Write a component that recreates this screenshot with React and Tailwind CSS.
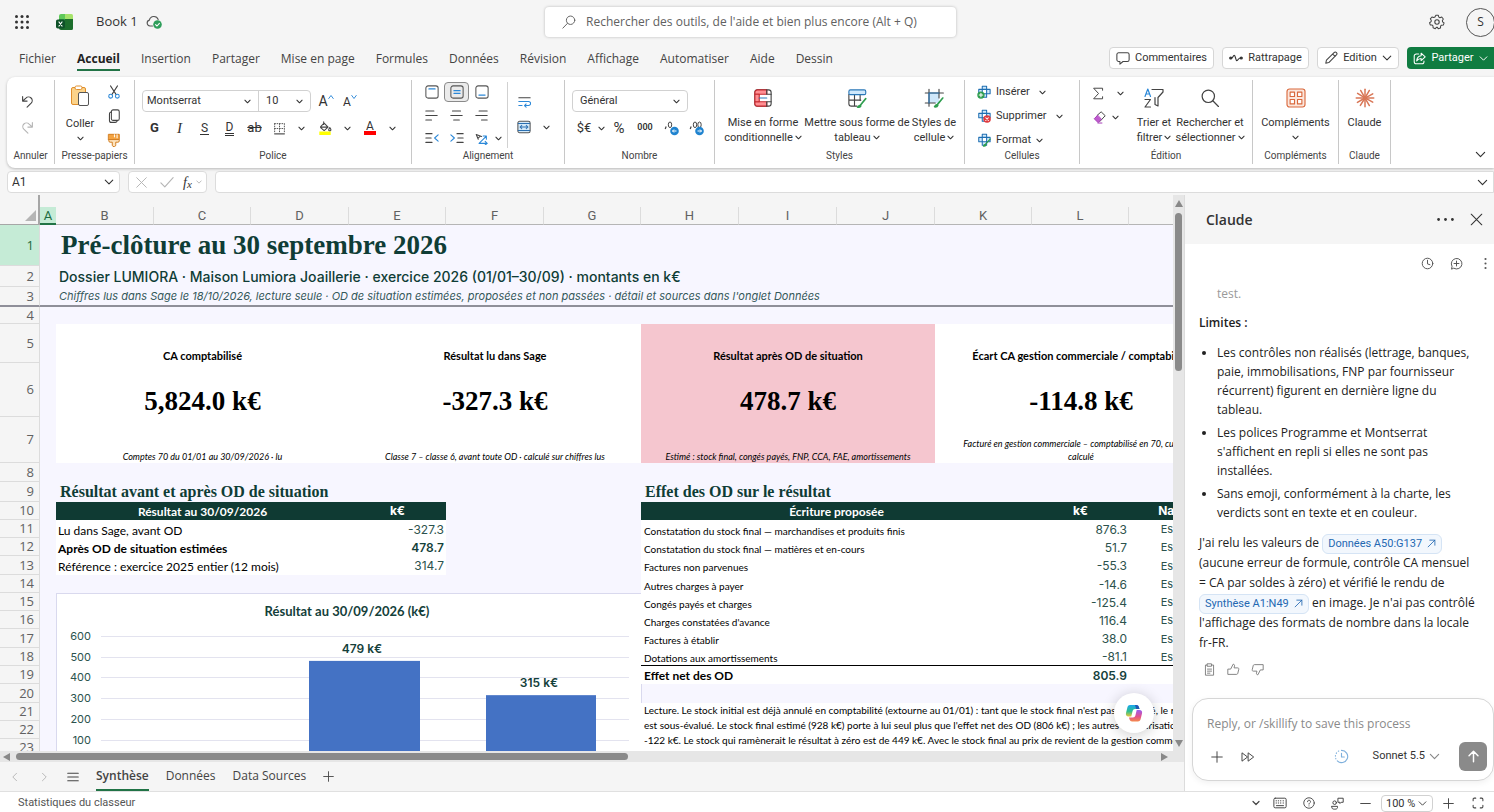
import React, { useState } from 'react';

const ROW_HEAD = 'border-b border-r border-[#dcdcdc] bg-[#f5f5f5] pr-[5px] text-right align-middle font-normal text-[#616161]';

const menuTabs = [
  'Fichier', 'Accueil', 'Insertion', 'Partager', 'Mise en page', 'Formules',
  'Données', 'Révision', 'Affichage', 'Automatiser', 'Aide', 'Dessin',
];

const columns = ['B', 'C', 'D', 'E', 'F', 'G', 'H', 'I', 'J', 'K', 'L', 'M'];

const entries = [
  { row: 11, label: 'Constatation du stock final — marchandises et produits finis', value: '876.3' },
  { row: 12, label: 'Constatation du stock final — matières et en-cours', value: '51.7' },
  { row: 13, label: 'Factures non parvenues', value: '-55.3' },
  { row: 14, label: 'Autres charges à payer', value: '-14.6' },
  { row: 15, label: 'Congés payés et charges', value: '-125.4' },
  { row: 16, label: "Charges constatées d'avance", value: '116.4' },
  { row: 17, label: 'Factures à établir', value: '38.0' },
  { row: 18, label: 'Dotations aux amortissements', value: '-81.1' },
];

const results = {
  11: { label: 'Lu dans Sage, avant OD', value: '-327.3' },
  12: { label: 'Après OD de situation estimées', value: '478.7', bold: true },
  13: { label: 'Référence : exercice 2025 entier (12 mois)', value: '314.7' },
};

const kpis = [
  { title: 'CA comptabilisé', value: '5,824.0 k€', note: ['Comptes 70 du 01/01 au 30/09/2026 · lu'] },
  { title: 'Résultat lu dans Sage', value: '-327.3 k€', note: ['Classe 7 – classe 6, avant toute OD · calculé sur chiffres lus'] },
  { title: 'Résultat après OD de situation', value: '478.7 k€', note: ['Estimé : stock final, congés payés, FNP, CCA, FAE, amortissements'], pink: true },
  { title: 'Écart CA gestion commerciale / comptabilité', value: '-114.8 k€', note: ['Facturé en gestion commerciale – comptabilisé en 70, cumul lu,', 'calculé'] },
];

/* ---------- Icons ---------- */

const Svg = ({ size = 16, children, className = '', ...rest }) => (
  <svg
    width={size}
    height={size}
    viewBox="0 0 16 16"
    fill="none"
    stroke="currentColor"
    strokeLinecap="round"
    strokeLinejoin="round"
    aria-hidden="true"
    className={`shrink-0 ${className}`}
    {...rest}
  >
    {children}
  </svg>
);

const Chevron = ({ size = 7, className = '' }) => (
  <Svg size={size} className={className} strokeWidth={size > 8 ? 1.7 : 2.4}>
    <path d="M2 5l6 6 6-6" />
  </Svg>
);

const WaffleIcon = () => (
  <Svg size={16} stroke="none" fill="#333">
    {[2.5, 8, 13.5].map((y) => [2.5, 8, 13.5].map((x) => <circle key={`${x}-${y}`} cx={x} cy={y} r="1.5" />))}
  </Svg>
);

const ExcelLogo = () => (
  <svg width="18" height="18" viewBox="0 0 18 18" aria-hidden="true">
    <path d="M5 1h5v5.5H3V3a2 2 0 0 1 2-2z" fill="#5fc95a" />
    <path d="M9 1h6.500A1.500 1.500 0 0 1 17 2.500V6.500H9z" fill="#a6e36b" />
    <path d="M3 6h14v4H3z" fill="#2f9e46" />
    <path d="M9 6h8v9.500A1.500 1.500 0 0 1 15.500 17H5a2 2 0 0 1-2-2v-3h6z" fill="#1c6e2c" />
    <rect x="0" y="6.500" width="9" height="9" rx="1.800" fill="#0e5128" />
    <path d="M3 9l3 4M6 9l-3 4" stroke="#fff" strokeWidth="1.200" strokeLinecap="round" />
  </svg>
);

const CloudSavedIcon = () => (
  <Svg size={16} stroke="#555" strokeWidth="1.1">
    <path d="M6.500 12H4a3 3 0 0 1-.6-5.900A4.600 4.600 0 0 1 12.200 5.500" />
    <circle cx="11.500" cy="10.500" r="4.300" fill="#2f9e5b" stroke="none" />
    <path d="M9.600 10.700l1.400 1.300 2.400-2.700" stroke="#fff" />
  </Svg>
);

const SearchLeftIcon = () => (
  <Svg size={14} strokeWidth="1.100">
    <circle cx="9.800" cy="6" r="4.800" />
    <path d="M6.200 9.600 1 15" />
  </Svg>
);

const GearIcon = () => (
  <Svg size={16} stroke="#444" strokeWidth="1.100">
    <path d="M6.700 1.200h2.600l.5 1.900 1.200.6 1.900-.7 1.700 2.100-1 1.700.2 1.300 1.600 1.100-.8 2.400-2 .1-.9.900-.1 2-2.400.8L8.300 14h-1l-1.300 1.400-2.300-.9-.1-2-.9-.9-2-.2L0 9.100l1.600-1.200.2-1.300-1-1.700L2.500 3l1.900.6 1.300-.6z" transform="translate(.6 .2) scale(.94)" />
    <circle cx="8" cy="8" r="2.200" />
  </Svg>
);

const UndoIcon = ({ flip, color }) => (
  <Svg size={13} stroke={color} strokeWidth="1.400" className={flip ? '-scale-x-100' : ''}>
    <path d="M2 2v5.500h5.500M2.300 7.200 6 3.800a4.500 4.500 0 0 1 6.500 6.300L7.500 15" />
  </Svg>
);

const PasteIcon = () => (
  <svg width="20" height="22" viewBox="0 0 20 22" aria-hidden="true">
    <rect x="1.500" y="2.500" width="14" height="17" rx="1.500" fill="#fbd38a" stroke="#e08e2b" />
    <rect x="5" y="1" width="7" height="3.500" rx="1.500" fill="#fff" stroke="#e08e2b" />
    <rect x="8.500" y="7.500" width="10" height="13" rx="1.500" fill="#fff" stroke="#555" />
  </svg>
);

const CutIcon = () => (
  <Svg size={14} strokeWidth="1.200">
    <path d="M4 1l6.500 10M12 1 5.500 11" stroke="#444" />
    <circle cx="4.200" cy="12.800" r="2.200" stroke="#2b88d8" />
    <circle cx="11.800" cy="12.800" r="2.200" stroke="#2b88d8" />
  </Svg>
);

const CopyIcon = () => (
  <Svg size={14} stroke="#444" strokeWidth="1.200">
    <rect x="5" y="1" width="9" height="12" rx="2" />
    <path d="M5 3.500c-1.500 0-2.200.8-2.200 2V13c0 1.500.8 2.300 2.200 2.300h4.500c1 0 1.700-.5 2-1.300" />
  </Svg>
);

const BrushIcon = () => (
  <Svg size={14} stroke="#d17b1b" strokeWidth="1.100">
    <path d="M2 1.500h12v6H2z" fill="#f4a340" />
    <path d="M2 7.500h12v1.500a1.500 1.500 0 0 1-1.500 1.500H10V13a2 2 0 0 1-4 1v-3.500H3.500A1.500 1.500 0 0 1 2 9z" fill="#fde3bd" />
    <path d="M8.500 2v2.500M11.500 2v3.500" stroke="#fff" />
  </Svg>
);

const BordersIcon = () => (
  <Svg size={13} stroke="#555" strokeWidth="1.200" strokeDasharray="1 2">
    <path d="M2 2h12M2 2v12M14 2v12M8 2v12M2 8h12" />
    <path d="M2 14.500h12" strokeDasharray="none" strokeWidth="1.600" />
  </Svg>
);

const FillIcon = () => (
  <Svg size={14} stroke="#444" strokeWidth="1.200">
    <path d="M6.500 1v3M3 6.500 7 2.500l4.500 4.500-4.500 4L3 7.500zM3.500 7h7.500" />
    <path d="M13.500 7.500c1 1.300 1.300 2 1.300 2.500a1.300 1.300 0 0 1-2.600 0c0-.5.3-1.200 1.300-2.500z" />
    <rect x="1.500" y="12" width="13" height="4" fill="#ffff00" stroke="none" />
  </Svg>
);

// Box with a blue line at the top, the middle or the bottom
const VAlignIcon = ({ lines }) => (
  <Svg size={14} stroke="#555" strokeWidth="1.200">
    <rect x="1" y="1" width="14" height="14" rx="2.500" />
    {lines.map((y) => <path key={y} d={`M4.500 ${y}h7`} stroke="#2b88d8" strokeWidth="1.400" />)}
  </Svg>
);

const HAlignIcon = ({ d }) => (
  <Svg size={13} stroke="#444" strokeWidth="1.300"><path d={d} /></Svg>
);

const IndentIcon = ({ arrow, lines }) => (
  <Svg size={14} stroke="#444" strokeWidth="1.300">
    <path d={lines} />
    <path d={arrow} stroke="#2b88d8" />
  </Svg>
);

const OrientationIcon = () => (
  <Svg size={13} stroke="#2b88d8" strokeWidth="1.300">
    <path d="M1.500 3 8 5.500M1.500 3 4 9M4.500 7 6.500 5" stroke="#444" />
    <path d="M5 14 14 5M14 9V5h-4M6 14h9M12.500 11.500 15 14l-2.500 2" />
  </Svg>
);

const WrapIcon = () => (
  <Svg size={13} stroke="#2b88d8" strokeWidth="1.300">
    <path d="M1 3.500h14" stroke="#444" />
    <path d="M1 8h12a2.300 2.300 0 0 1 0 5H8M10 11l-2 2 2 2M1 13h4" />
  </Svg>
);

const MergeIcon = () => (
  <Svg size={14} stroke="#2b6fb0" strokeWidth="1.200">
    <rect x="1" y="1.500" width="14" height="13" rx="2" fill="#d5eaf9" stroke="#555" />
    <path d="M1.500 4h13M1.500 12h13M3.500 8h9M5.500 6l-2 2 2 2M10.500 6l2 2-2 2" />
  </Svg>
);

const DecimalIcon = ({ more }) => (
  <svg width="16" height="15" viewBox="0 0 16 15" fill="none" stroke="#444" aria-hidden="true">
    <path d="M2.200 5.500 1.200 8" strokeWidth="1.200" />
    <ellipse cx="6" cy="3.800" rx="1.700" ry="2.800" />
    {more && <ellipse cx="10.500" cy="3.800" rx="1.700" ry="2.800" />}
    <circle cx="10.500" cy="10" r="4.300" fill="#1f83cf" stroke="none" />
    <path d={more ? 'M8.500 10h4M11 8.500l1.500 1.500-1.500 1.500' : 'M12.500 10h-4M10 8.500 8.500 10l1.500 1.500'} stroke="#fff" />
  </svg>
);

const CondFormatIcon = () => (
  <Svg size={20} strokeWidth=".9" stroke="#444">
    <rect x="1.500" y="1.500" width="13" height="13" rx="2" fill="#fff" />
    <path d="M1.500 5V3.500a2 2 0 0 1 2-2H11V5zM1.500 11v1.500a2 2 0 0 0 2 2H11V11z" fill="#ff8f93" stroke="#c5282f" />
    <path d="M1.500 5H5v6H1.500z" fill="#ff8f93" stroke="#c5282f" />
    <path d="M11 1.500V5h3.500M11 14.500V11h3.500" />
    <path d="M5 8h6" stroke="#2b78b8" />
  </Svg>
);

const TableStyleIcon = () => (
  <Svg size={20} strokeWidth=".9" stroke="#444">
    <path d="M1.500 5v7.500a2 2 0 0 0 2 2H8M6 5v9.500M10.500 5v5M1.500 9.700H11" />
    <rect x="1.500" y="1.500" width="13.500" height="3.800" rx="1.200" fill="#cfe8fb" stroke="#2b78b8" />
    <path d="M15 8.500 10.500 14M10.500 13.800c-1 .1-1.500.8-2 1.500 1.200.2 2.200-.2 2.500-1z" stroke="#2f9e4f" strokeWidth="1.300" />
  </Svg>
);

const CellStyleIcon = () => (
  <Svg size={20} strokeWidth=".9" stroke="#444">
    <path d="M4 4h8v8H4z" fill="#cfe8fb" stroke="none" />
    <path d="M4 1v13.500M12 1v7M1 4h14.500M1 12h8" />
    <path d="M4 4h8M4 12V4" stroke="#2b78b8" />
    <path d="M15 8 10.500 13.500M10.500 13.300c-1 .1-1.500.8-2 1.700 1.200.2 2.200-.2 2.500-1z" stroke="#2f9e4f" strokeWidth="1.300" />
  </Svg>
);

const CellsIcon = ({ kind }) => (
  <Svg size={14} strokeWidth="1.200" stroke="#1f6fb2">
    <path d="M6 1.500h5V5h4v5h-4v4H6v-4H2V5h4z" fill="#cfe8fb" />
    <path d="M6 5h5v5H6z" fill="#fff" />
    {kind === 'insert' && (
      <>
        <circle cx="4.500" cy="11.500" r="4.200" fill="#2f9e4f" stroke="none" />
        <path d="M4.500 9.500v4M2.500 11.500h4" stroke="#fff" />
      </>
    )}
    {kind === 'delete' && (
      <>
        <circle cx="11.500" cy="11.500" r="4.300" fill="#e03a3e" stroke="none" />
        <path d="m10 10 3 3M13 10l-3 3" stroke="#fff" />
      </>
    )}
    {kind === 'format' && <path d="M15 7 9.500 13M9.500 13c-1 0-1.500.8-2 2 1.200.1 2.200-.2 2.500-1z" stroke="#2f9e4f" strokeWidth="1.500" />}
  </Svg>
);

const EraserIcon = () => (
  <Svg size={13} strokeWidth="1.200" stroke="#444">
    <path d="m5 5.500 5-4.500 5 4.800-6.500 7" fill="#fff" />
    <path d="M5.500 5.500 1.500 9.500l4.800 4.800L10 10.500z" fill="#c05bcf" stroke="#a33bb5" />
    <path d="M6 14.800h5" stroke="#a33bb5" />
  </Svg>
);

const SortFilterIcon = () => (
  <svg width="20" height="20" viewBox="0 0 20 20" fill="none" strokeLinecap="round" strokeLinejoin="round" aria-hidden="true">
    <path d="M8 1.500h11v2.500l-5 5.500V18l-3-1.500V9.500" stroke="#444" strokeWidth="1.200" />
    <path d="M1 8.500 3.800 1 6.500 8.500M2 6h3.500" stroke="#2b88d8" strokeWidth="1.200" />
    <path d="M1 11.500h5.500L1 19h5.500" stroke="#444" strokeWidth="1.200" />
  </svg>
);

const SearchIcon = () => (
  <Svg size={18} stroke="#444" strokeWidth="1.100">
    <circle cx="6.500" cy="6.500" r="5.500" />
    <path d="m10.500 10.500 5 5" />
  </Svg>
);

const AddinsIcon = () => (
  <Svg size={20} stroke="#d9683c" strokeWidth=".9">
    <rect x=".8" y=".8" width="14.400" height="14.400" rx="2" fill="#fbe6dc" />
    <path d="M3.300 3.300h3.500v3.500H3.300zM9.200 3.300h3.500v3.500H9.200zM3.300 9.200h3.500v3.500H3.300zM9.200 9.200h3.500v3.500H9.200z" fill="#fff" />
  </Svg>
);

const ClaudeIcon = () => (
  <Svg size={20} stroke="#d97757" strokeWidth="1.200">
    {[0, 30, 62, 90, 118, 150, 180, 212, 240, 270, 302, 330].map((a) => (
      <path key={a} d="M8 6.800V1" transform={`rotate(${a} 8 8)`} />
    ))}
    <circle cx="8" cy="8" r="1.600" fill="#d97757" stroke="none" />
  </Svg>
);

const CommentIcon = () => (
  <Svg size={14} stroke="#444" strokeWidth="1.200">
    <path d="M3 2h10a2 2 0 0 1 2 2v6a2 2 0 0 1-2 2H8l-3.500 3v-3H3a2 2 0 0 1-2-2V4a2 2 0 0 1 2-2z" />
  </Svg>
);

const CatchUpIcon = () => (
  <Svg size={14} stroke="#333" strokeWidth="1.300">
    <circle cx="2" cy="8" r="1.200" fill="#333" />
    <path d="M3 8c1.500 0 1.500-3 3-3s1.500 6 3 6 1.500-3 4-3" />
    <circle cx="14" cy="8" r="1.200" fill="#333" />
  </Svg>
);

const PencilIcon = () => (
  <Svg size={14} stroke="#444" strokeWidth="1.200">
    <path d="m2 14 .8-3.500L11.500 1.800a1.900 1.900 0 0 1 2.700 2.700L5.500 13.200zM10 3.500l2.700 2.700" />
  </Svg>
);

const ShareIcon = () => (
  <Svg size={13} strokeWidth="1.300">
    <path d="M7 2.500H4a2.500 2.500 0 0 0-2.500 2.500v7A2.500 2.500 0 0 0 4 14.500h7a2.500 2.500 0 0 0 2.500-2.500v-1" />
    <path d="M10 1.500 15 6l-5 4.500V8C7.500 8 6 9 4.500 11c.2-3.500 2-6 5.500-6.500z" />
  </Svg>
);

const CopilotIcon = () => (
  <svg width="20" height="20" viewBox="0 0 20 20" aria-hidden="true">
    <defs>
      <linearGradient id="cpBlue" x1="0" y1="0" x2="0" y2="1">
        <stop offset="0" stopColor="#1aa7ee" />
        <stop offset=".55" stopColor="#2fbf8f" />
        <stop offset="1" stopColor="#e9c53a" />
      </linearGradient>
      <linearGradient id="cpPink" x1="0" y1="0" x2="0" y2="1">
        <stop offset="0" stopColor="#9a5df0" />
        <stop offset=".55" stopColor="#e2508f" />
        <stop offset="1" stopColor="#f58a4b" />
      </linearGradient>
    </defs>
    <path d="M6 2h6.500c1.200 0 2 .8 2.400 2L15.500 6H11c-1.300 0-2 .8-2.400 2L7.300 13.500H4.500C2.500 13.500 1.500 12 2 10l1.500-6C3.900 2.800 4.800 2 6 2z" fill="url(#cpBlue)" />
    <path d="M14 18.500H8c-1.200 0-2-.8-2.400-2L5 14.500h4c1.300 0 2-.8 2.400-2L12.700 7h2.800c2 0 3 1.500 2.500 3.500l-1.500 6c-.4 1.200-1.300 2-2.500 2z" fill="url(#cpPink)" />
    <path d="M11 2h1.500c1.200 0 2 .8 2.400 2L15.500 6h-3.300z" fill="#1f55b5" />
  </svg>
);

/* ---------- Ribbon ---------- */

const Tool = ({ label, className = '', children, onClick }) => (
  <button type="button" aria-label={label} onClick={onClick} className={`flex h-[20px] shrink-0 items-center justify-center text-[#333] ${className}`}>
    {children}
  </button>
);

const Group = ({ label, className, children }) => (
  <section aria-label={label} className={`flex shrink-0 flex-col border-r border-[#c8c8c8] ${className}`}>
    <div className="min-h-0 flex-1">{children}</div>
    <div className="shrink-0 text-center text-[10px] leading-4 text-[#444]">{label}</div>
  </section>
);

const BigTool = ({ icon, lines, chevron, className }) => (
  <button type="button" className={`flex shrink-0 flex-col items-center text-[11px] leading-[15px] text-[#333] ${className}`}>
    <span className="mb-[7px] flex h-[20px] items-center">{icon}</span>
    {lines.map((line, i) => (
      <span key={line} className="flex items-center whitespace-nowrap">
        {line}
        {chevron && lines.length > 1 && i === lines.length - 1 && <Chevron className="ml-[2px]" />}
      </span>
    ))}
    {chevron && lines.length === 1 && <Chevron className="mt-[4px]" />}
  </button>
);

const SelectBox = ({ label, value, options, className, chevronClass = 'right-[5px]', chevronSize }) => (
  <span className={`relative flex items-center ${className}`}>
    <select aria-label={label} defaultValue={value} className="h-full w-full appearance-none bg-transparent pl-[4px] text-[#333] outline-none">
      {options.map((option) => <option key={option}>{option}</option>)}
    </select>
    <Chevron size={chevronSize} className={`pointer-events-none absolute ${chevronClass}`} />
  </span>
);

const Ribbon = () => (
  <div className="ml-[7px] flex h-[91px] shrink-0 overflow-hidden rounded-l-lg bg-white pt-[3px] pb-[4px] font-['Roboto',sans-serif] shadow-[0_1px_3px_rgba(0,0,0,0.25)]">
    <Group label="Annuler" className="w-[48px]">
      <div className="flex flex-col items-center gap-[6px] pr-[6px] pt-[11px]">
        <Tool label="Annuler" className="w-[20px]"><UndoIcon color="#444" /></Tool>
        <Tool label="Rétablir" className="w-[20px]"><UndoIcon flip color="#b5b5b5" /></Tool>
      </div>
    </Group>

    <Group label="Presse-papiers" className="w-[80px]">
      <div className="flex pl-[8px] pt-[2px]">
        <button type="button" className="flex w-[34px] flex-col items-center pt-[3px] text-[11px] leading-4 text-[#333]">
          <PasteIcon />
          <span className="mt-[9px]">Coller</span>
          <Chevron className="mt-[3px]" />
        </button>
        <div className="ml-[7px] flex flex-col gap-[4px]">
          <Tool label="Couper" className="w-[20px]"><CutIcon /></Tool>
          <Tool label="Copier" className="w-[20px]"><CopyIcon /></Tool>
          <Tool label="Reproduire la mise en forme" className="w-[20px]"><BrushIcon /></Tool>
        </div>
      </div>
    </Group>

    <Group label="Police" className="w-[277px]">
      <div className="flex items-center pl-[7px] pt-[10px] text-[11px]">
        <div className="flex h-[22px] overflow-hidden rounded border border-[#d1d1d1]">
          <SelectBox label="Police" value="Montserrat" options={['Montserrat', 'Calibri']} className="w-[116px] border-r border-[#d1d1d1]" chevronClass="right-[7px]" />
          <SelectBox label="Taille de police" value="10" options={['10', '11', '12']} className="w-[51px] pl-[3px]" chevronClass="right-[7px]" />
        </div>
        <Tool label="Agrandir la police" className="ml-[3px] w-[24px]">
          <span className="text-[14px]">A</span>
          <Svg size={6} stroke="#2b88d8" strokeWidth="2.500" className="mb-[8px]"><path d="M2 12 8 4l6 8" /></Svg>
        </Tool>
        <Tool label="Réduire la police" className="w-[24px]">
          <span className="pt-[2px] text-[12px]">A</span>
          <Svg size={6} stroke="#2b88d8" strokeWidth="2.500" className="mb-[8px]"><path d="M2 4l6 8 6-8" /></Svg>
        </Tool>
      </div>
      <div className="flex items-center pl-[7px] pt-[6px] text-[13px]">
        <Tool label="Gras" className="w-[25px] font-bold">G</Tool>
        <Tool label="Italique" className="w-[25px] font-['Liberation_Serif',serif] text-[15px] italic">I</Tool>
        <Tool label="Souligné" className="w-[25px]"><span className="border-b border-[#333] px-[1px] text-[12px] leading-[12px]">S</span></Tool>
        <Tool label="Double soulignement" className="w-[25px]"><span className="border-b-3 border-double border-[#333] px-[1px] text-[12px] leading-[12px]">D</span></Tool>
        <Tool label="Barré" className="w-[25px] line-through">ab</Tool>
        <Tool label="Bordures" className="w-[25px]"><BordersIcon /></Tool>
        <Tool label="Options de bordures" className="w-[18px]"><Chevron /></Tool>
        <Tool label="Couleur de remplissage" className="w-[30px]"><FillIcon /></Tool>
        <Tool label="Options de remplissage" className="w-[14px]"><Chevron /></Tool>
        <Tool label="Couleur de police" className="w-[32px]"><span className="border-b-4 border-[#f00] px-[2px] text-[12px] leading-[10px]">A</span></Tool>
        <Tool label="Options de couleur" className="w-[12px]"><Chevron /></Tool>
      </div>
    </Group>

    <Group label="Alignement" className="w-[153px]">
      <div className="flex">
        <div className="mt-[2px] flex w-[96px] flex-col gap-[3px] border-r border-[#d1d1d1] pl-[7px]">
          <div className="flex">
            <Tool label="Aligner en haut" className="w-[25px]"><VAlignIcon lines={[4.5]} /></Tool>
            <Tool label="Aligner au centre" className="w-[25px] rounded border border-[#8a8a8a] bg-[#ebebeb]"><VAlignIcon lines={[6.5, 9.5]} /></Tool>
            <Tool label="Aligner en bas" className="w-[25px]"><VAlignIcon lines={[11.5]} /></Tool>
          </div>
          <div className="flex">
            <Tool label="Aligner à gauche" className="w-[25px]"><HAlignIcon d="M1 2.500h10M1 8h14M1 13.500h7" /></Tool>
            <Tool label="Centrer" className="w-[25px]"><HAlignIcon d="M3 2.500h10M1 8h14M4.500 13.500h7" /></Tool>
            <Tool label="Aligner à droite" className="w-[25px]"><HAlignIcon d="M5 2.500h10M1 8h14M8 13.500h7" /></Tool>
          </div>
          <div className="flex">
            <Tool label="Diminuer le retrait" className="w-[25px]"><IndentIcon lines="M1 3h7M1 8h6M1 13h7" arrow="m15 4.500-4 3.500 4 3.500" /></Tool>
            <Tool label="Augmenter le retrait" className="w-[25px]"><IndentIcon lines="M8 3h7M9 8h6M8 13h7" arrow="m1 4.500 4 3.500-4 3.500" /></Tool>
            <Tool label="Orientation" className="w-[25px]"><OrientationIcon /></Tool>
            <Tool label="Options d'orientation" className="w-[8px]"><Chevron /></Tool>
          </div>
        </div>
        <div className="flex flex-col gap-[6px] pl-[5px] pt-[11px]">
          <Tool label="Renvoyer à la ligne" className="w-[22px]"><WrapIcon /></Tool>
          <div className="flex">
            <Tool label="Fusionner" className="w-[22px]"><MergeIcon /></Tool>
            <Tool label="Options de fusion" className="w-[22px]"><Chevron /></Tool>
          </div>
        </div>
      </div>
    </Group>

    <Group label="Nombre" className="w-[150px]">
      <div className="pl-[7px] pt-[10px] text-[11px]">
        <SelectBox label="Format de nombre" value="Général" options={['Général', 'Nombre', 'Pourcentage']} className="h-[22px] w-[116px] rounded border border-[#d1d1d1] pl-[3px]" chevronClass="right-[7px]" />
      </div>
      <div className="flex items-center pl-[8px] pt-[6px] text-[13px]">
        <Tool label="Format monétaire" className="w-[22px]">$€</Tool>
        <Tool label="Options monétaires" className="w-[12px]"><Chevron /></Tool>
        <Tool label="Pourcentage" className="w-[24px] text-[15px]">%</Tool>
        <Tool label="Séparateur de milliers" className="w-[28px] text-[9px] font-semibold">000</Tool>
        <Tool label="Réduire les décimales" className="w-[25px]"><DecimalIcon /></Tool>
        <Tool label="Ajouter une décimale" className="w-[26px]"><DecimalIcon more /></Tool>
      </div>
    </Group>

    <Group label="Styles" className="w-[250px]">
      <div className="flex pl-[6px] pt-[8px]">
        <BigTool icon={<CondFormatIcon />} lines={['Mise en forme', 'conditionnelle']} chevron className="w-[84px]" />
        <BigTool icon={<TableStyleIcon />} lines={['Mettre sous forme de', 'tableau']} chevron className="w-[104px]" />
        <BigTool icon={<CellStyleIcon />} lines={['Styles de', 'cellule']} chevron className="w-[50px]" />
      </div>
    </Group>

    <Group label="Cellules" className="w-[115px]">
      <div className="flex flex-col gap-[4px] pl-[12px] pt-[2px] text-[11px] text-[#333]">
        <button type="button" className="flex h-[20px] items-center gap-[5px]"><CellsIcon kind="insert" />Insérer<Chevron className="ml-[4px]" /></button>
        <button type="button" className="flex h-[20px] items-center gap-[5px]"><CellsIcon kind="delete" />Supprimer<Chevron className="ml-[4px]" /></button>
        <button type="button" className="flex h-[20px] items-center gap-[5px]"><CellsIcon kind="format" />Format<Chevron /></button>
      </div>
    </Group>

    <Group label="Édition" className="w-[173px]">
      <div className="flex">
        <div className="flex w-[54px] flex-col gap-[4px] pl-[8px] pt-[3px]">
          <div className="flex">
            <Tool label="Somme automatique" className="w-[20px]">
              <Svg size={13} stroke="#444" strokeWidth="1.200"><path d="M13 4V1.500H2L8 8l-6 6.500h11V12" /></Svg>
            </Tool>
            <Tool label="Options de somme" className="w-[24px]"><Chevron /></Tool>
          </div>
          <div className="flex">
            <Tool label="Effacer" className="w-[22px]"><EraserIcon /></Tool>
            <Tool label="Options d'effacement" className="w-[10px]"><Chevron /></Tool>
          </div>
        </div>
        <div className="flex pt-[8px]">
          <BigTool icon={<SortFilterIcon />} lines={['Trier et', 'filtrer']} chevron className="w-[40px]" />
          <BigTool icon={<SearchIcon />} lines={['Rechercher et', 'sélectionner']} chevron className="w-[72px]" />
        </div>
      </div>
    </Group>

    <Group label="Compléments" className="w-[86px]">
      <div className="flex justify-center pt-[8px]">
        <BigTool icon={<AddinsIcon />} lines={['Compléments']} chevron className="w-[70px]" />
      </div>
    </Group>

    <Group label="Claude" className="w-[52px]">
      <div className="flex justify-center pt-[8px]">
        <BigTool icon={<ClaudeIcon />} lines={['Claude']} className="w-[40px]" />
      </div>
    </Group>

    <button type="button" aria-label="Réduire le ruban" className="ml-auto mr-[8px] self-end pb-[4px] text-[#333]"><Chevron size={11} /></button>
  </div>
);

/* ---------- Sheet ---------- */

const ResultChart = () => {
  const y = (v) => 168 - v * 0.209;
  return (
    <svg width="586" height="164" className="block border-l border-t border-r border-[#d9d9ee] bg-white" role="img" aria-label="Résultat au 30/09/2026 (k€)">
      <text x="290" y="22" textAnchor="middle" className="fill-[#14403a] font-['Lato',sans-serif] text-[13px] font-bold">Résultat au 30/09/2026 (k€)</text>
      {[100, 200, 300, 400, 500, 600].map((v) => (
        <g key={v}>
          <path d={`M44 ${Math.round(y(v)) - 0.5}H572`} stroke="#e3e3ef" />
          <text x="34" y={Math.round(y(v)) + 3} textAnchor="end" className="fill-[#2c524d] font-['Inter',sans-serif] text-[11px]">{v}</text>
        </g>
      ))}
      <rect x="252" y={y(479) - 1} width="111" height="104" fill="#4472c4" />
      <rect x="429" y={y(315) - 1} width="110" height="70" fill="#4472c4" />
      <text x="305" y="59" textAnchor="middle" className="fill-[#14403a] font-['Inter',sans-serif] text-[12px] font-semibold">479 k€</text>
      <text x="482" y="93" textAnchor="middle" className="fill-[#14403a] font-['Inter',sans-serif] text-[12px] font-semibold">315 k€</text>
    </svg>
  );
};

const RowHead = ({ n }) => <th scope="row" className={ROW_HEAD}>{n}</th>;

const Sheet = () => (
  <table className="w-[1227px] table-fixed border-separate border-spacing-0 bg-[#f7f6ff] text-[13px] leading-none">
    <colgroup>
      <col className="w-[40px]" />
      <col className="w-[16px]" />
      <col className="w-[98px]" />
      <col className="w-[97px]" />
      <col className="w-[98px]" />
      <col className="w-[97px]" />
      <col className="w-[98px]" />
      <col className="w-[97px]" />
      <col className="w-[98px]" />
      <col className="w-[98px]" />
      <col className="w-[98px]" />
      <col className="w-[97px]" />
      <col className="w-[97px]" />
      <col className="w-[98px]" />
    </colgroup>
    <thead className="bg-[#f5f5f5] font-['Roboto',sans-serif] text-[#616161]">
      <tr className="h-[12px]">
        <td rowSpan={2} className="border-r-2 border-b border-[#a6a6a6] align-bottom">
          <svg width="11" height="11" className="mb-[3px] ml-auto mr-[2px] block" aria-hidden="true"><path d="M11 0v11H0z" fill="#b5b5b5" /></svg>
        </td>
        <td colSpan={13} />
      </tr>
      <tr className="h-[18px]">
        <th scope="col" className="border-b-2 border-[#217346] bg-[#c5ebd6] font-normal text-[#1e6b41]">A</th>
        {columns.map((c) => (
          <th key={c} scope="col" className="border-b border-r border-[#dcdcdc] border-b-[#b5b5b5] font-normal">{c === 'M' ? '' : c}</th>
        ))}
      </tr>
    </thead>
    <tbody className="text-black">
      <tr className="h-[41px]">
        <th scope="row" className="border-b border-r border-[#dcdcdc] bg-[#c5ebd6] pr-[5px] text-right font-normal text-[#1e6b41]">1</th>
        <td />
        <td colSpan={12} className="pl-[5px] align-middle font-['Liberation_Serif',serif] text-[27px] font-bold text-[#0f3d36]">Pré-clôture au 30 septembre 2026</td>
      </tr>
      <tr className="h-[21px]">
        <RowHead n={2} />
        <td />
        <td colSpan={12} className="pl-[3px] align-middle font-['Inter',sans-serif] text-[14px] font-medium text-[#0f3d36]">
          Dossier LUMIORA · Maison Lumiora Joaillerie · exercice 2026 (01/01–30/09) · montants en k€
        </td>
      </tr>
      <tr className="h-[20px]">
        <th scope="row" className="border-b-2 border-r border-[#dcdcdc] border-b-[#8f8f99] bg-[#f5f5f5] pr-[5px] text-right font-normal text-[#616161]">3</th>
        <td className="border-b-2 border-[#8f8f99]" />
        <td colSpan={12} className="border-b-2 border-[#8f8f99] pl-[3px] align-middle font-['Inter',sans-serif] text-[11px] text-[#35585a] italic">
          Chiffres lus dans Sage le 18/10/2026, lecture seule · OD de situation estimées, proposées et non passées · détail et sources dans l'onglet Données
        </td>
      </tr>
      <tr className="h-[17px]"><RowHead n={4} /><td colSpan={13} /></tr>

      <tr className="h-[39px]">
        <RowHead n={5} />
        <td />
        {kpis.map((k) => (
          <td key={k.title} colSpan={3} className={`pb-[2px] text-center align-bottom font-['Lato',sans-serif] text-[11px] font-bold whitespace-nowrap ${k.pink ? 'bg-[#f5c6cf]' : 'bg-white'}`}>{k.title}</td>
        ))}
      </tr>
      <tr className="h-[54px]">
        <RowHead n={6} />
        <td />
        {kpis.map((k) => (
          <td key={k.title} colSpan={3} className={`pb-[2px] text-center align-bottom font-['Liberation_Serif',serif] text-[27px] font-bold ${k.pink ? 'bg-[#f5c6cf]' : 'bg-white'}`}>{k.value}</td>
        ))}
      </tr>
      <tr className="h-[46px]">
        <RowHead n={7} />
        <td />
        {kpis.map((k) => (
          <td key={k.title} colSpan={3} className={`text-center align-bottom font-['Lato',sans-serif] text-[9px] leading-[13px] whitespace-nowrap italic ${k.pink ? 'bg-[#f5c6cf]' : 'bg-white'}`}>
            {k.note.map((line) => <div key={line}>{line}</div>)}
          </td>
        ))}
      </tr>
      <tr className="h-[19px]"><RowHead n={8} /><td colSpan={13} /></tr>

      <tr className="h-[20px] font-['Liberation_Serif',serif] text-[16px] font-bold text-[#0f3d36]">
        <th scope="row" className={`${ROW_HEAD} font-['Open_Sans',sans-serif] text-[13px]`}>9</th>
        <td />
        <td colSpan={6} className="pl-[4px] align-middle">Résultat avant et après OD de situation</td>
        <td colSpan={6} className="pl-[4px] align-middle">Effet des OD sur le résultat</td>
      </tr>
      <tr className="h-[18px] font-['Lato',sans-serif] text-[12px] font-bold text-white">
        <th scope="row" className={`${ROW_HEAD} font-['Open_Sans',sans-serif] text-[13px]`}>10</th>
        <td />
        <td colSpan={3} className="bg-[#0f3a33] pt-[2px] text-center">Résultat au 30/09/2026</td>
        <td className="bg-[#0f3a33] text-center font-['Inter',sans-serif]">k€</td>
        <td colSpan={2} />
        <td colSpan={4} className="bg-[#0f3a33] pt-[2px] text-center">Écriture proposée</td>
        <td className="bg-[#0f3a33] text-center font-['Inter',sans-serif]">k€</td>
        <td className="bg-[#0f3a33] text-center font-['Inter',sans-serif]">Nature</td>
      </tr>

      {entries.map((e) => {
        const left = results[e.row];
        return (
          <tr key={e.row} className={e.row === 13 || e.row === 17 ? 'h-[19px]' : 'h-[18px]'}>
            <RowHead n={e.row} />
            <td />
            {left && (
              <>
                <td colSpan={3} className={`bg-white pt-[3px] pl-[2px] font-['Lato',sans-serif] text-[12px] whitespace-nowrap ${left.bold ? 'font-bold' : ''}`}>{left.label}</td>
                <td className={`bg-white pt-px pr-[2px] text-right font-['Inter',sans-serif] text-[12px] ${left.bold ? 'font-semibold text-[#14403a]' : 'text-[#2c524d]'}`}>{left.value}</td>
                <td colSpan={2} />
              </>
            )}
            {e.row === 14 && <td colSpan={6} />}
            {e.row === 15 && <td colSpan={6} rowSpan={9} className="align-top"><ResultChart /></td>}
            <td colSpan={4} className={`bg-white pt-[3px] pl-[3px] font-['Lato',sans-serif] text-[10px] whitespace-nowrap ${e.row === 18 ? 'border-b border-black' : ''}`}>{e.label}</td>
            <td className={`bg-white pt-px pr-[2px] text-right font-['Inter',sans-serif] text-[12px] text-[#2c524d] ${e.row === 18 ? 'border-b border-black' : ''}`}>{e.value}</td>
            <td className={`bg-white pt-px text-center font-['Inter',sans-serif] text-[11px] text-[#2c524d] ${e.row === 18 ? 'border-b border-black' : ''}`}>Estimé</td>
          </tr>
        );
      })}
      <tr className="h-[18px]">
        <RowHead n={19} />
        <td />
        <td colSpan={4} className="bg-white pt-[2px] pl-[3px] font-['Lato',sans-serif] text-[12px] font-bold">Effet net des OD</td>
        <td className="bg-white pt-[2px] pr-[2px] text-right font-['Inter',sans-serif] text-[12px] font-semibold text-[#14403a]">805.9</td>
        <td className="bg-white" />
      </tr>
      <tr className="h-[19px]"><RowHead n={20} /><td /><td colSpan={6} /></tr>
      <tr className="h-[18px]">
        <RowHead n={21} />
        <td />
        <td colSpan={6} rowSpan={3} className="bg-white pl-[3px] align-top font-['Lato',sans-serif] text-[10px] leading-[15px] whitespace-nowrap">
          <div className="h-[54px] overflow-hidden">
            <p>Lecture. Le stock initial est déjà annulé en comptabilité (extourne au 01/01) : tant que le stock final n'est pas constaté, le résultat</p>
            <p>est sous-évalué. Le stock final estimé (928 k€) porte à lui seul plus que l'effet net des OD (806 k€) ; les autres régularisations</p>
            <p>-122 k€. Le stock qui ramènerait le résultat à zéro est de 449 k€. Avec le stock final au prix de revient de la gestion commerciale</p>
            <p>résultat après OD serait de 309 k€.</p>
          </div>
        </td>
      </tr>
      <tr className="h-[18px]"><RowHead n={22} /><td /></tr>
      <tr className="h-[18px]"><RowHead n={23} /><td /></tr>
    </tbody>
  </table>
);

/* ---------- Claude panel ---------- */

const CellLink = ({ children }) => (
  <a href="#plage" className="-my-px inline-flex h-[20px] items-center gap-[5px] rounded-md border border-[#d5e4f5] bg-[#f2f7fd] px-[5px] align-middle font-['Roboto',sans-serif] text-[11px] text-[#2468b2]">
    {children}
    <Svg size={9} strokeWidth="1.500"><path d="M2 14 14 2M5 2h9v9" /></Svg>
  </a>
);

const ClaudePanel = () => {
  const [message, setMessage] = useState('');

  return (
    <aside className="flex w-[310px] shrink-0 flex-col border-l border-[#dcdcdc] bg-white">
      <header className="flex h-[49px] shrink-0 items-center bg-[#f5f5f5] pl-[21px] pr-[11px]">
        <h2 className="text-[14px] font-semibold text-[#333]">Claude</h2>
        <button type="button" aria-label="Plus d'options" className="ml-auto text-[#333]">
          <Svg size={17} stroke="none" fill="currentColor"><circle cx="1.500" cy="8" r="1.300" /><circle cx="8" cy="8" r="1.300" /><circle cx="14.500" cy="8" r="1.300" /></Svg>
        </button>
        <button type="button" aria-label="Fermer" className="ml-[16px] text-[#333]">
          <Svg size={13} strokeWidth="1.300"><path d="m1.500 1.500 13 13M14.500 1.500l-13 13" /></Svg>
        </button>
      </header>

      <div className="flex shrink-0 justify-end gap-[16px] pt-[13px] pr-[2px] text-[#555]">
        <button type="button" aria-label="Historique"><Svg size={13} strokeWidth="1.200"><circle cx="8" cy="8" r="6.500" /><path d="M8 4v4.500l3 1" /></Svg></button>
        <button type="button" aria-label="Nouvelle conversation"><Svg size={13} strokeWidth="1.200"><path d="M2 14.500 2.500 11.500A6.500 6.500 0 1 1 5 14zM8 5v6M5 8h6" /></Svg></button>
        <button type="button" aria-label="Menu"><Svg size={13} stroke="none" fill="currentColor"><circle cx="8" cy="2.500" r="1.300" /><circle cx="8" cy="8" r="1.300" /><circle cx="8" cy="13.500" r="1.300" /></Svg></button>
      </div>

      <div className="flex-1 pl-[14px] pr-[14px] pt-[14px] text-[12px] leading-[19px] text-[#222]">
        <p className="pl-[18px] text-[#9a9a9a]">test.</p>
        <p className="mt-[10px] font-semibold">Limites :</p>
        <ul className="mt-[11px] flex list-disc flex-col gap-[4px] pl-[18px] whitespace-nowrap">
          <li>Les contrôles non réalisés (lettrage, banques,<br />paie, immobilisations, FNP par fournisseur<br />récurrent) figurent en dernière ligne du<br />tableau.</li>
          <li>Les polices Programme et Montserrat<br />s'affichent en repli si elles ne sont pas<br />installées.</li>
          <li>Sans emoji, conformément à la charte, les<br />verdicts sont en texte et en couleur.</li>
        </ul>
        <p className="mt-[11px] leading-5 whitespace-nowrap">
          J'ai relu les valeurs de <CellLink>Données A50:G137</CellLink><br />
          (aucune erreur de formule, contrôle CA mensuel<br />
          = CA par soldes à zéro) et vérifié le rendu de<br />
          <CellLink>Synthèse A1:N49</CellLink> en image. Je n'ai pas contrôlé<br />
          l'affichage des formats de nombre dans la locale<br />
          fr-FR.
        </p>
        <div className="mt-[10px] flex gap-[11px] pl-[4px] text-[#777]">
          <button type="button" aria-label="Copier"><Svg size={13} strokeWidth="1.100"><path d="M5 2.500H3v12.500h10V2.500h-2M5.500 1h5v3h-5zM5.500 7.500h5M5.500 10h5M5.500 12.500h3" /></Svg></button>
          <button type="button" aria-label="Bonne réponse"><Svg size={13} strokeWidth="1.100"><path d="M1.500 7.500h3L7.500 1.500c1.500 0 2 1 1.700 2.300L8.700 6h4.500c1 0 1.500.8 1.300 1.700l-1.200 5c-.2.900-.8 1.300-1.600 1.300H1.500z" /></Svg></button>
          <button type="button" aria-label="Mauvaise réponse"><Svg size={13} strokeWidth="1.100" className="rotate-180"><path d="M1.500 7.500h3L7.500 1.500c1.500 0 2 1 1.700 2.300L8.700 6h4.500c1 0 1.500.8 1.300 1.700l-1.200 5c-.2.900-.8 1.300-1.600 1.300H1.500z" /></Svg></button>
        </div>
      </div>

      <form onSubmit={(e) => e.preventDefault()} className="mb-[10px] ml-[7px] flex h-[83px] shrink-0 flex-col rounded-2xl border border-[#d6d6d6] bg-white px-[14px] pt-[14px] shadow-[0_2px_6px_rgba(0,0,0,0.06)]">
        <input
          type="text"
          aria-label="Message"
          value={message}
          onChange={(e) => setMessage(e.target.value)}
          placeholder="Reply, or /skillify to save this process"
          className="h-5 w-full text-[12px] outline-none placeholder:text-[#8a8a8a]"
        />
        <div className="-mr-[8px] mt-[9px] flex items-center text-[#444]">
          <button type="button" aria-label="Ajouter" className="ml-[4px]"><Svg size={12} strokeWidth="1.300"><path d="M8 1v14M1 8h14" /></Svg></button>
          <button type="button" aria-label="Exécuter tout" className="ml-[18px]"><Svg size={14} strokeWidth="1.100"><path d="m1.500 3.500 6 4.500-6 4.500zM8.500 3.500l6 4.500-6 4.500z" /></Svg></button>
          <span className="ml-auto mr-[24px] text-[#7fb0dc]">
            <Svg size={15} strokeWidth="1.200"><path d="M8 1.500A6.500 6.500 0 1 1 3.500 12.600M8 4.500V8.500h3" /><path d="M2 10.500A6.500 6.500 0 0 1 6 1.800" strokeDasharray=".5 2.500" /></Svg>
          </span>
          <button type="button" className="flex items-center gap-[4px] font-['Roboto',sans-serif] text-[11px] text-[#333]">Sonnet 5.5<Chevron size={11} className="text-[#888]" /></button>
          <button type="submit" aria-label="Envoyer" className="ml-[19px] flex h-[29px] w-[28px] items-center justify-center rounded-md bg-[#8a8a8a] text-white">
            <Svg size={13} strokeWidth="1.800"><path d="M8 14.500v-13M2.500 7 8 1.500 13.500 7" /></Svg>
          </button>
        </div>
      </form>
    </aside>
  );
};

/* ---------- Page ---------- */

const App = () => {
  const [activeTab, setActiveTab] = useState('Accueil');
  const [activeSheet, setActiveSheet] = useState('Synthèse');

  return (
    <div className="flex h-screen flex-col overflow-hidden bg-[#f5f5f5] font-['Open_Sans',sans-serif] text-[#333]">
      {/* Title bar */}
      <header className="flex h-[44px] shrink-0 items-center pl-[7px]">
        <div className="flex flex-1 items-center">
          <button type="button" aria-label="Lanceur d'applications" className="ml-[7px]"><WaffleIcon /></button>
          <span className="ml-[26px]"><ExcelLogo /></span>
          <span className="ml-[22px] text-[13px]">Book 1</span>
          <span className="ml-[8px]"><CloudSavedIcon /></span>
        </div>
        <label className="flex h-[30px] w-[411px] items-center gap-[10px] rounded bg-white pl-[17px] text-[#616161] shadow-[0_0_3px_rgba(0,0,0,0.25)]">
          <SearchLeftIcon />
          <input type="search" placeholder="Rechercher des outils, de l'aide et bien plus encore (Alt + Q)" className="w-full text-[12px] outline-none placeholder:text-[#616161]" />
        </label>
        <div className="flex flex-1 items-center justify-end">
          <button type="button" aria-label="Paramètres"><GearIcon /></button>
          <button type="button" aria-label="Compte" className="-mr-[1px] ml-[21px] flex h-[29px] w-[29px] items-center justify-center rounded-full border border-[#555] text-[12px]">S</button>
        </div>
      </header>

      {/* Menu tabs */}
      <div className="flex h-[33px] shrink-0 items-start">
        <nav className="flex gap-[21px] pl-[19px] pt-[5px] text-[12px] text-[#444]">
          {menuTabs.map((tab) => (
            <button
              key={tab}
              type="button"
              onClick={() => setActiveTab(tab)}
              className={`h-[22px] whitespace-nowrap ${tab === activeTab ? 'border-b-2 border-[#217346] font-bold text-[#222]' : 'border-b-2 border-transparent'}`}
            >
              {tab}
            </button>
          ))}
        </nav>
        <div className="ml-auto flex gap-[8px] pt-[3px] font-['Roboto',sans-serif] text-[11px]">
          <button type="button" className="flex h-[22px] w-[105px] items-center justify-center gap-[5px] rounded border border-[#d6d6d6] bg-white"><CommentIcon />Commentaires</button>
          <button type="button" className="flex h-[22px] w-[87px] items-center justify-center gap-[5px] rounded border border-[#d6d6d6] bg-white"><CatchUpIcon />Rattrapage</button>
          <button type="button" className="flex h-[22px] w-[82px] items-center justify-center gap-[5px] rounded border border-[#d6d6d6] bg-white"><PencilIcon />Edition<Chevron size={10} /></button>
          <button type="button" className="flex h-[22px] w-[87px] items-center justify-center gap-[5px] rounded-l bg-[#107c41] text-white"><ShareIcon />Partager<Chevron size={9} /></button>
        </div>
      </div>

      <Ribbon />

      {/* Formula bar */}
      <div className="mt-[3px] flex h-[22px] shrink-0 gap-[8px] pl-[7px]">
        <div className="flex w-[113px] items-center rounded border border-[#dcdcdc] bg-white pr-[5px]">
          <input aria-label="Zone Nom" defaultValue="A1" className="w-full pl-[4px] font-['Roboto',sans-serif] text-[12px] outline-none" />
          <button type="button" aria-label="Liste des noms"><Chevron size={10} /></button>
        </div>
        <div className="flex w-[79px] items-center rounded border border-[#dcdcdc] bg-white pl-[7px] text-[#b5b5b5]">
          <button type="button" aria-label="Annuler la saisie"><Svg size={11} strokeWidth="1.400"><path d="m1 1 14 14M15 1 1 15" /></Svg></button>
          <button type="button" aria-label="Valider la saisie" className="ml-[13px]"><Svg size={14} strokeWidth="1.300"><path d="m1 9 4.500 4.500L15 3" /></Svg></button>
          <button type="button" aria-label="Insérer une fonction" className="ml-[9px] flex items-center font-['Liberation_Serif',serif] text-[14px] text-[#333] italic">
            f<span className="pt-[4px] text-[11px]">x</span>
          </button>
          <Chevron size={6} className="ml-[4px]" />
        </div>
        <div className="flex flex-1 items-center rounded-l border border-[#dcdcdc] bg-white pr-[5px]">
          <input aria-label="Barre de formule" className="w-full outline-none" />
          <button type="button" aria-label="Développer la barre de formule"><Chevron size={11} /></button>
        </div>
      </div>

      {/* Workbook and side panel */}
      <main className="mt-[2px] flex min-h-0 flex-1">
        <div className="flex min-w-0 flex-1 flex-col">
          <div className="relative flex min-h-0 flex-1">
            <div className="min-w-0 flex-1 overflow-hidden"><Sheet /></div>
            <div className="flex w-[11px] shrink-0 flex-col items-center bg-[#e6e6e6] pt-[5px]">
              <svg width="8" height="7" aria-hidden="true"><path d="M4 0l4 7H0z" fill="#888" /></svg>
              <div className="mt-[6px] h-[158px] w-[7px] rounded-full bg-[#8a8a8a]" />
              <svg width="8" height="7" className="mt-auto mb-[4px]" aria-hidden="true"><path d="M4 7 0 0h8z" fill="#888" /></svg>
            </div>
            <button type="button" aria-label="Copilot" className="absolute right-[30px] bottom-[18px] flex h-[40px] w-[40px] items-center justify-center rounded-full bg-white shadow-[0_2px_14px_rgba(0,0,0,0.2)]"><CopilotIcon /></button>
          </div>
          <div className="flex h-[11px] shrink-0 items-center bg-[#e6e6e6] pl-[3px] pr-[16px]">
            <svg width="7" height="8" aria-hidden="true"><path d="M0 4l7-4v8z" fill="#888" /></svg>
            <div className="ml-[6px] h-[7px] w-[612px] rounded-full bg-[#8a8a8a]" />
            <svg width="7" height="8" className="ml-auto" aria-hidden="true"><path d="M7 4 0 0v8z" fill="#888" /></svg>
          </div>
          <div className="flex h-[29px] shrink-0 items-center pl-[10px] text-[12px] text-[#444]">
            <button type="button" aria-label="Feuille précédente" className="text-[#b5b5b5]"><Svg size={10} strokeWidth="1.500"><path d="M10.500 2 4.500 8l6 6" /></Svg></button>
            <button type="button" aria-label="Feuille suivante" className="ml-[19px] text-[#b5b5b5]"><Svg size={10} strokeWidth="1.500"><path d="m5.500 2 6 6-6 6" /></Svg></button>
            <button type="button" aria-label="Toutes les feuilles" className="ml-[18px]"><Svg size={12} strokeWidth="1.500"><path d="M1 3h14M1 8h14M1 13h14" /></Svg></button>
            <div className="ml-[17px] flex h-full gap-[17px]">
              {['Synthèse', 'Données', 'Data Sources'].map((name) => (
                <button
                  key={name}
                  type="button"
                  onClick={() => setActiveSheet(name)}
                  className={`h-full border-b-2 ${name === activeSheet ? 'border-[#217346] font-semibold' : 'border-transparent'}`}
                >
                  {name}
                </button>
              ))}
            </div>
            <button type="button" aria-label="Nouvelle feuille" className="ml-[17px]"><Svg size={11} strokeWidth="1.300"><path d="M8 1v14M1 8h14" /></Svg></button>
          </div>
        </div>
        <ClaudePanel />
      </main>

      {/* Status bar */}
      <footer className="flex h-[21px] shrink-0 items-center border-t border-[#e0e0e0] bg-white pt-[2px] pl-[18px] pr-[10px] font-['Roboto',sans-serif] text-[11px] text-[#555]">
        <button type="button">Statistiques du classeur</button>
        <div className="ml-auto flex items-center text-[#444]">
          <button type="button" aria-label="Afficher plus"><Chevron size={8} /></button>
          <button type="button" aria-label="Clavier" className="ml-[13px]"><Svg size={14} strokeWidth="1.100"><rect x="1" y="2.500" width="14" height="11" rx="1.500" /><path d="M3.500 5.500h.5M6 5.500h.5M8.500 5.500H9M11.500 5.500h.5M3.500 8h.5M6 8h.5M8.500 8H9M11.500 8h.5M4 11h8" /></Svg></button>
          <button type="button" aria-label="Aide" className="ml-[16px]"><Svg size={12} strokeWidth="1.200"><circle cx="8" cy="8" r="7" /><path d="M6 6.300a2 2 0 1 1 2.800 1.800c-.6.300-.8.700-.8 1.400M8 11.800v.2" /></Svg></button>
          <button type="button" aria-label="Commentaires au développeur" className="ml-[16px]"><Svg size={13} strokeWidth="1.200"><circle cx="4.500" cy="7" r="2.200" /><path d="M1 11.500h7v1.500c0 1.300-1.200 2-3.500 2S1 14.300 1 13zM9 1.500h6v5h-2.500L11 8V6.500H9z" /></Svg></button>
          <button type="button" aria-label="Zoom arrière" className="ml-[16px]"><Svg size={11} strokeWidth="1.400"><path d="M1 8h14" /></Svg></button>
          <SelectBox label="Zoom" value="100 %" options={['100 %', '125 %']} className="ml-[10px] h-[17px] w-[52px] rounded border border-[#d1d1d1]" chevronSize={9} />
          <button type="button" aria-label="Zoom avant" className="ml-[10px]"><Svg size={11} strokeWidth="1.400"><path d="M8 1v14M1 8h14" /></Svg></button>
          <button type="button" aria-label="Plein écran" className="ml-[18px]"><Svg size={12} strokeWidth="1.400"><path d="M1.500 5V3a1.500 1.500 0 0 1 1.500-1.500h2M11 1.500h2A1.500 1.500 0 0 1 14.500 3v2M14.500 11v2a1.500 1.500 0 0 1-1.500 1.500h-2M5 14.500H3A1.500 1.500 0 0 1 1.500 13v-2" /></Svg></button>
        </div>
      </footer>
    </div>
  );
};

export default App;
